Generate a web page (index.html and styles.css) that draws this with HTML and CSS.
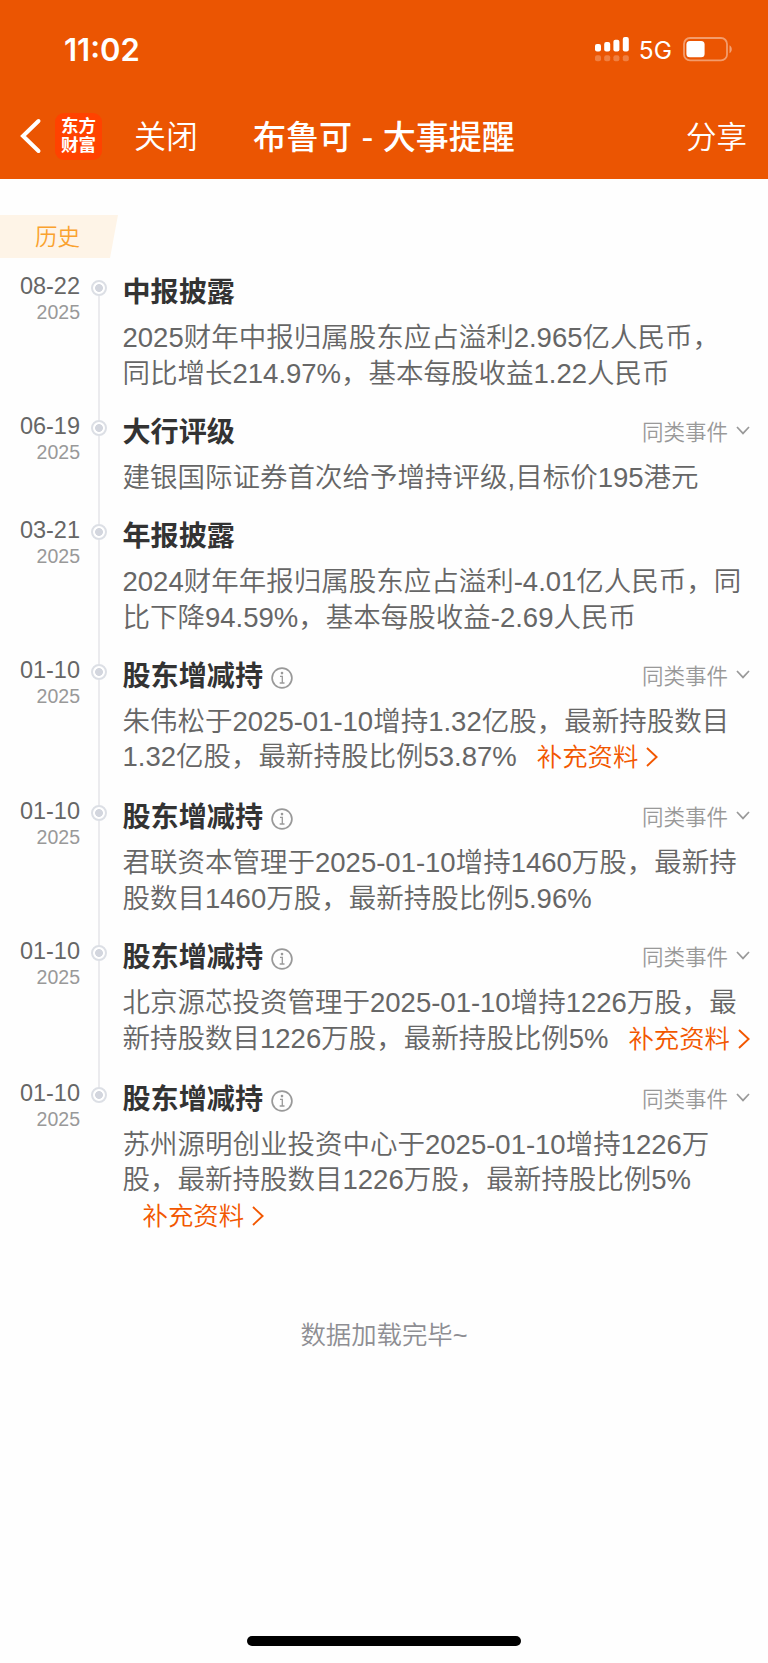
FILE: index.html
```html
<!DOCTYPE html>
<html lang="zh-CN">

<head>
<meta charset="UTF-8">
<meta name="viewport" content="width=device-width, initial-scale=1.0">
<title>布鲁可 - 大事提醒</title>
<link rel="stylesheet" href="styles.css">
</head>

<body>

<!-- 图标 -->
<svg class="sprite" width="0" height="0">
<symbol id="info" viewBox="0 0 22 22">
<circle cx="11" cy="11" r="9.9" fill="none" stroke="#999" stroke-width="1.7"/>
<circle cx="11" cy="6.1" r="1.3" fill="#999"/>
<path d="M9 9.4h2.3v6.4M8.7 16h4.8" fill="none" stroke="#999" stroke-width="1.3"/>
</symbol>
<symbol id="down" viewBox="0 0 14 9">
<path d="M1 1l6 6.4L13 1" fill="none" stroke="#999" stroke-width="1.7"/>
</symbol>
<symbol id="right" viewBox="0 0 12 20">
<path d="M1 1l9.6 9L1 19" fill="none" stroke="#f25700" stroke-width="1.9"/>
</symbol>
</svg>

<header class="header">
<div class="status-bar">
<span class="time">11:02</span>
<svg class="signal" width="34" height="25" viewBox="0 0 34 25">
<g fill="#fff">
<rect x="0" y="7" width="6" height="7.5" rx="2"/>
<rect x="9.2" y="5" width="6" height="9.5" rx="2"/>
<rect x="18.4" y="2.8" width="6" height="11.7" rx="2"/>
<rect x="27.8" y="0" width="6" height="14.5" rx="2"/>
</g>
<g fill="#fff" opacity=".25">
<rect x="0" y="18.2" width="6" height="6" rx="2"/>
<rect x="9.2" y="18.2" width="6" height="6" rx="2"/>
<rect x="18.4" y="18.2" width="6" height="6" rx="2"/>
<rect x="27.8" y="18.2" width="6" height="6" rx="2"/>
</g>
</svg>
<span class="network">5G</span>
<svg class="battery" width="50" height="25" viewBox="0 0 50 25">
<rect x="1" y="1" width="43" height="22.4" rx="6" fill="none" stroke="#fff" stroke-width="1.8" opacity=".42"/>
<rect x="3.4" y="4" width="18.2" height="16.2" rx="3.5" fill="#fff"/>
<path d="M46.5 8.2c3 1.4 3 6.6 0 8z" fill="#fff" opacity=".45"/>
</svg>
</div>
<nav class="nav">
<svg class="back" width="22" height="36" viewBox="0 0 22 36">
<path d="M18.5 3L3 18l15.5 15" fill="none" stroke="#fff" stroke-width="4" stroke-linecap="round" stroke-linejoin="miter"/>
</svg>
<div class="logo">东方<br>财富</div>
<span class="close">关闭</span>
<h1 class="nav-title">布鲁可 - 大事提醒</h1>
<span class="share">分享</span>
</nav>
</header>

<main>
<div class="tag">历史</div>

<ul class="timeline">
<li class="item">
<div class="date"><b>08-22</b><i>2025</i></div>
<div class="rail"></div>
<div class="content">
<div class="head"><h2>中报披露</h2></div>
<p>2025财年中报归属股东应占溢利2.965亿人民币，<br>同比增长214.97%，基本每股收益1.22人民币</p>
</div>
</li>
<li class="item">
<div class="date"><b>06-19</b><i>2025</i></div>
<div class="rail"></div>
<div class="content">
<div class="head"><h2>大行评级</h2><span class="more">同类事件<svg><use href="#down"/></svg></span></div>
<p>建银国际证券首次给予增持评级,目标价195港元</p>
</div>
</li>
<li class="item">
<div class="date"><b>03-21</b><i>2025</i></div>
<div class="rail"></div>
<div class="content">
<div class="head"><h2>年报披露</h2></div>
<p>2024财年年报归属股东应占溢利-4.01亿人民币，同<br>比下降94.59%，基本每股收益-2.69人民币</p>
</div>
</li>
<li class="item has-link">
<div class="date"><b>01-10</b><i>2025</i></div>
<div class="rail"></div>
<div class="content">
<div class="head"><h2>股东增减持</h2><svg class="info"><use href="#info"/></svg><span class="more">同类事件<svg><use href="#down"/></svg></span></div>
<p>朱伟松于2025-01-10增持1.32亿股，最新持股数目<br>1.32亿股，最新持股比例53.87%<a class="link">补充资料<svg><use href="#right"/></svg></a></p>
</div>
</li>
<li class="item">
<div class="date"><b>01-10</b><i>2025</i></div>
<div class="rail"></div>
<div class="content">
<div class="head"><h2>股东增减持</h2><svg class="info"><use href="#info"/></svg><span class="more">同类事件<svg><use href="#down"/></svg></span></div>
<p>君联资本管理于2025-01-10增持1460万股，最新持<br>股数目1460万股，最新持股比例5.96%</p>
</div>
</li>
<li class="item has-link">
<div class="date"><b>01-10</b><i>2025</i></div>
<div class="rail"></div>
<div class="content">
<div class="head"><h2>股东增减持</h2><svg class="info"><use href="#info"/></svg><span class="more">同类事件<svg><use href="#down"/></svg></span></div>
<p>北京源芯投资管理于2025-01-10增持1226万股，最<br>新持股数目1226万股，最新持股比例5%<a class="link">补充资料<svg><use href="#right"/></svg></a></p>
</div>
</li>
<li class="item">
<div class="date"><b>01-10</b><i>2025</i></div>
<div class="rail"></div>
<div class="content">
<div class="head"><h2>股东增减持</h2><svg class="info"><use href="#info"/></svg><span class="more">同类事件<svg><use href="#down"/></svg></span></div>
<p>苏州源明创业投资中心于2025-01-10增持1226万<br>股，最新持股数目1226万股，最新持股比例5%<br><a class="link">补充资料<svg><use href="#right"/></svg></a></p>
</div>
</li>
</ul>

<p class="loaded">数据加载完毕~</p>
</main>

<div class="home-bar"></div>

</body>

</html>
```
FILE: styles.css
```css
* {
box-sizing: border-box;
margin: 0;
padding: 0;
}

body {
display: flex;
flex-direction: column;
height: 1663px;
font-family: "Liberation Sans", "Noto Sans CJK SC", sans-serif;
background-color: #fefefe;
color: #666;
white-space: nowrap;
overflow: hidden;
}

.sprite {
position: absolute;
}

/* 顶部 */
.header {
height: 179px;
background-color: #eb5502;
color: #fff;
}

.status-bar {
display: flex;
align-items: center;
height: 98px;
padding: 0 35px 0 64px;
}

.time {
font-family: Inter, sans-serif;
font-size: 31px;
font-weight: 600;
margin-right: auto;
}

.network {
font-family: Inter, sans-serif;
font-size: 24.5px;
margin: 2px 11px 0 10px;
}

.nav {
display: flex;
align-items: center;
height: 76px;
padding: 0 21px 0 20px;
line-height: 48px;
}

.logo {
width: 47px;
height: 47px;
margin-left: 13px;
padding-top: 4px;
border-radius: 9px;
background-color: #ff4200;
font-size: 17.5px;
font-weight: 700;
line-height: 19.5px;
text-align: center;
}

.close {
margin: 1px 0 0 32px;
font-size: 32px;
font-weight: 350;
}

.nav-title {
margin: -2px 0 0 55px;
font-family: "Noto Sans CJK SC", sans-serif;
font-size: 33px;
font-weight: 500;
word-spacing: 2px;
}

.share {
margin: 1px 0 0 auto;
font-size: 30.5px;
font-weight: 350;
}

/* 历史标签 */
.tag {
width: 118px;
height: 43px;
margin-top: 36px;
padding-left: 35px;
background-color: #fef4e7;
clip-path: polygon(0 0, 100% 0, 110px 100%, 0 100%);
color: #faa22e;
font-size: 22.5px;
font-weight: 350;
line-height: 45px;
}

/* 时间轴 */
.timeline {
margin-top: 14px;
list-style: none;
}

.item {
display: flex;
padding-right: 18px;
}

.date {
display: flex;
flex-direction: column;
width: 80px;
text-align: right;
}

.date b {
font-size: 23.5px;
font-weight: 400;
line-height: 28px;
}

.date i {
color: #999;
font-size: 19.5px;
font-style: normal;
line-height: 25px;
}

.rail {
display: flex;
flex-direction: column;
align-items: center;
width: 16px;
margin: 8px 16px 0 10.5px;
}

.rail::before {
content: "";
width: 12px;
height: 12px;
border: 2px solid #dcdfe5;
border-radius: 50%;
background: radial-gradient(circle, #d3d6de 3.6px, #fff 4.2px);
}

.rail::after {
content: "";
flex: 1;
width: 2px;
margin-bottom: -8px;
background-color: #ebebee;
}

.item:last-child .rail::after {
display: none;
}

.content {
flex: 1;
padding: 1px 0 20.8px;
}

.has-link .content {
padding-bottom: 21.6px;
}

.head {
display: flex;
align-items: center;
height: 40px;
margin-bottom: 7px;
}

.head h2 {
color: #333;
font-size: 28.1px;
font-weight: 700;
line-height: 40px;
}

.info {
width: 22px;
height: 22px;
margin: 2px 0 0 8px;
}

.more {
display: flex;
align-items: center;
margin: -5px 0 0 auto;
color: #999;
font-size: 21.5px;
font-weight: 350;
}

.more svg {
width: 14px;
height: 9px;
margin-left: 8px;
}

.content p {
font-size: 27.5px;
font-weight: 350;
line-height: 35.5px;
}

.link {
margin-left: 20px;
color: #f25700;
font-size: 25.4px;
}

.link svg {
width: 12px;
height: 20px;
margin-left: 8px;
vertical-align: -1px;
}

.loaded {
margin-top: 62px;
color: #8e8e93;
font-size: 25.4px;
font-weight: 350;
line-height: 36px;
text-align: center;
}

.home-bar {
width: 274px;
height: 10px;
margin: auto auto 17px;
border-radius: 5px;
background-color: #000;
}
```
